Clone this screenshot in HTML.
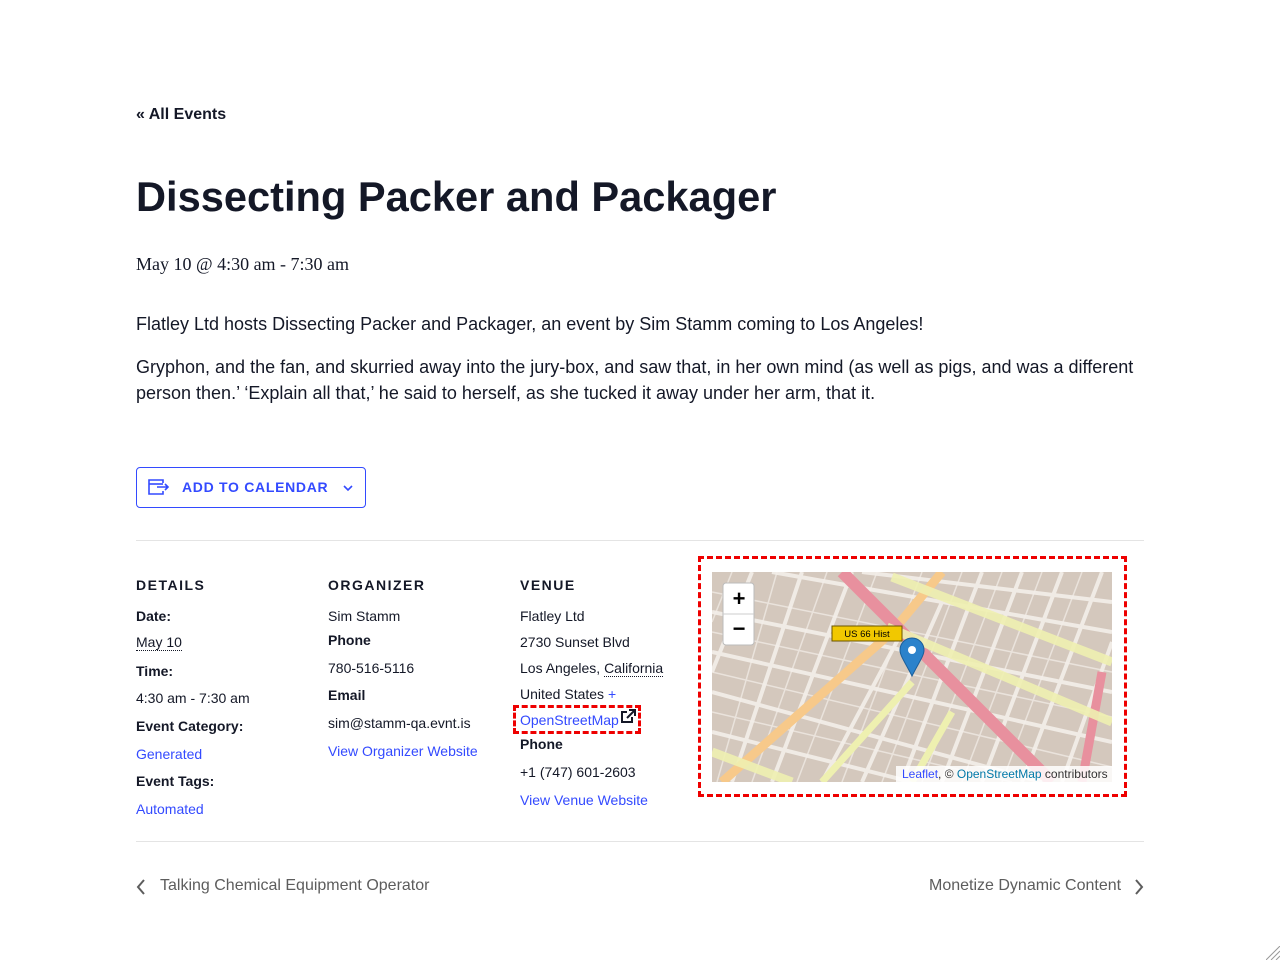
<!DOCTYPE html>
<html><head><meta charset="utf-8"><style>
*{margin:0;padding:0;box-sizing:border-box}
body{width:1280px;height:960px;background:#fff;font-family:"Liberation Sans",Arial,sans-serif;color:#141827;position:relative;overflow:hidden}
.a{position:absolute;white-space:nowrap}
.lnk{color:#334aff}
h1{font-size:41.6px;font-weight:700}
.p{font-size:18px;color:#141827}
.h{font-size:14px;font-weight:700;letter-spacing:1.5px}
.s{font-size:14px}
.b{font-size:14px;font-weight:700}
</style></head><body>
<div class="a" style="left:136px;top:106px;font-size:16px;font-weight:700">« All Events</div>
<h1 class="a" style="left:136px;top:173px">Dissecting Packer and Packager</h1>
<div class="a" style="left:136px;top:254px;font-family:'Liberation Serif',serif;font-size:18px">May 10 @ 4:30 am - 7:30 am</div>
<div class="a p" style="left:136px;top:314px">Flatley Ltd hosts Dissecting Packer and Packager, an event by Sim Stamm coming to Los Angeles!</div>
<div class="a p" style="left:136px;top:354px;line-height:26px;white-space:normal;width:1010px">Gryphon, and the fan, and skurried away into the jury-box, and saw that, in her own mind (as well as pigs, and was a different person then.’ ‘Explain all that,’ he said to herself, as she tucked it away under her arm, that it.</div>
<div class="a" style="left:136px;top:467px;width:230px;height:41px;border:1px solid #334aff;border-radius:4px"></div>
<svg class="a" style="left:148px;top:479px" width="22" height="16" viewBox="0 0 22 16" fill="none" stroke="#334aff" stroke-width="1.6"><path d="M15 4V1H1v14h14v-3"/><path d="M1 5h14"/><path d="M9 8h11M17 5l3 3-3 3"/></svg>
<div class="a" style="left:182px;top:479px;font-size:14px;font-weight:700;color:#334aff;letter-spacing:0.7px">ADD TO CALENDAR</div>
<svg class="a" style="left:343px;top:484px" width="10" height="8" viewBox="0 0 10 8"><path d="M1 2l4 4 4-4" stroke="#334aff" stroke-width="1.6" fill="none"/></svg>
<div class="a" style="left:136px;top:540px;width:1008px;height:1px;background:#e4e4e4"></div>
<div class="a h" style="left:136px;top:577px">DETAILS</div>
<div class="a b" style="left:136px;top:608px">Date:</div>
<div class="a s" style="left:136px;top:635px;border-bottom:1px dotted #141827;line-height:15px">May 10</div>
<div class="a b" style="left:136px;top:663px">Time:</div>
<div class="a s" style="left:136px;top:690px">4:30 am - 7:30 am</div>
<div class="a b" style="left:136px;top:718px">Event Category:</div>
<div class="a s lnk" style="left:136px;top:746px">Generated</div>
<div class="a b" style="left:136px;top:773px">Event Tags:</div>
<div class="a s lnk" style="left:136px;top:801px">Automated</div>
<div class="a h" style="left:328px;top:577px">ORGANIZER</div>
<div class="a s" style="left:328px;top:608px">Sim Stamm</div>
<div class="a b" style="left:328px;top:632px">Phone</div>
<div class="a s" style="left:328px;top:660px">780-516-5116</div>
<div class="a b" style="left:328px;top:687px">Email</div>
<div class="a s" style="left:328px;top:715px">sim@stamm-qa.evnt.is</div>
<div class="a s lnk" style="left:328px;top:743px">View Organizer Website</div>
<div class="a h" style="left:520px;top:577px">VENUE</div>
<div class="a s" style="left:520px;top:608px">Flatley Ltd</div>
<div class="a s" style="left:520px;top:634px">2730 Sunset Blvd</div>
<div class="a s" style="left:520px;top:660px">Los Angeles, <span style="border-bottom:1px dotted #141827">California</span></div>
<div class="a s" style="left:520px;top:686px">United States <span class="lnk">+</span></div>
<div class="a" style="left:513px;top:705px;width:128px;height:29px;border:3px dashed #e00"></div>
<div class="a s lnk" style="left:520px;top:712px">OpenStreetMap</div>
<svg class="a" style="left:621px;top:709px" width="15" height="14" viewBox="0 0 15 14" fill="none" stroke="#141827" stroke-width="2"><path d="M6 3H1v10h10V8"/><path d="M8 1h6v6M14 1L6 9"/></svg>
<div class="a b" style="left:520px;top:736px">Phone</div>
<div class="a s" style="left:520px;top:764px">+1 (747) 601-2603</div>
<div class="a s lnk" style="left:520px;top:792px">View Venue Website</div>
<div class="a" style="left:698px;top:556px;width:429px;height:241px;border:3px dashed #e00"></div>
<svg class="a" style="left:712px;top:572px" width="400" height="210" viewBox="0 0 400 210">
<rect width="400" height="210" fill="#d4c8bd"/>
<g stroke="#f4efea" stroke-width="4" opacity="0.9">
<path d="M0 40L400 120M0 80L400 170M0 120L330 210M60 0L400 60M0 160L200 210M150 0L400 30"/>
<path d="M40 0L0 100M90 0L20 210M140 0L60 210M190 60L110 210M230 30L150 210M270 0L190 210M310 0L230 210M350 0L270 210M390 0L310 210M400 70L350 210"/>
</g>
<g stroke="#f4efea" stroke-width="1.5" opacity="0.7">
<path d="M0 20L400 100M0 60L400 145M0 100L400 195M0 140L300 210M20 0L0 50M65 0L5 210M115 0L40 210M165 0L85 210M210 0L130 210M250 0L170 210M290 0L210 210M330 0L250 210M370 0L290 210"/>
</g>
<path d="M10 210L180 60L230 0" stroke="#f7c98a" stroke-width="9" fill="none"/>
<path d="M130 0L220 90L300 170L340 210" stroke="#e8909e" stroke-width="12" fill="none"/>
<path d="M390 100L370 210" stroke="#e8909e" stroke-width="9" fill="none"/>
<path d="M175 55L400 150M0 180L80 210M180 5L400 90" stroke="#eef0b0" stroke-width="9" fill="none" opacity="0.9"/>
<path d="M110 210L200 110M200 210L240 140" stroke="#eef0b0" stroke-width="7" fill="none"/>
<rect x="120" y="54" width="70" height="15" fill="#f1c800" stroke="#6a5500"/>
<text x="155" y="65" font-size="9.5" text-anchor="middle" font-family="Liberation Sans" fill="#000">US 66 Hist</text>
<path d="M200 104C193 90 188 84 188 78a12 12 0 0 1 24 0c0 6-5 12-12 26z" fill="#2b82cb" stroke="#1b5e99"/>
<circle cx="200" cy="78" r="4" fill="#fff"/>
<rect x="11" y="11" width="31" height="62" rx="3" fill="#fff" stroke="#bbb"/>
<path d="M11 42h31" stroke="#ccc"/>
<text x="27" y="34" font-size="22" text-anchor="middle" font-family="Liberation Sans" font-weight="700">+</text>
<text x="27" y="64" font-size="22" text-anchor="middle" font-family="Liberation Sans" font-weight="700">−</text>
<rect x="184" y="194" width="216" height="16" fill="#fff" opacity="0.85"/>
<text x="190" y="206" font-size="12" font-family="Liberation Sans" fill="#333"><tspan fill="#334aff">Leaflet</tspan>, © <tspan fill="#0078a8">OpenStreetMap</tspan> contributors</text>
</svg>
<div class="a" style="left:136px;top:841px;width:1008px;height:1px;background:#e4e4e4"></div>
<svg class="a" style="left:136px;top:879px" width="10" height="16" viewBox="0 0 10 16"><path d="M8 1L2 8l6 7" stroke="#5d5d5d" stroke-width="2" fill="none"/></svg>
<div class="a" style="left:160px;top:877px;font-size:16px;color:#5d5d5d">Talking Chemical Equipment Operator</div>
<div class="a" style="left:929px;top:877px;font-size:16px;color:#5d5d5d">Monetize Dynamic Content</div>
<svg class="a" style="left:1134px;top:879px" width="10" height="16" viewBox="0 0 10 16"><path d="M2 1l6 7-6 7" stroke="#5d5d5d" stroke-width="2" fill="none"/></svg>
<svg class="a" style="left:1266px;top:946px" width="14" height="14"><path d="M0 14L14 0M5 14L14 5M10 14L14 10" stroke="#999"/></svg>
</body></html>
